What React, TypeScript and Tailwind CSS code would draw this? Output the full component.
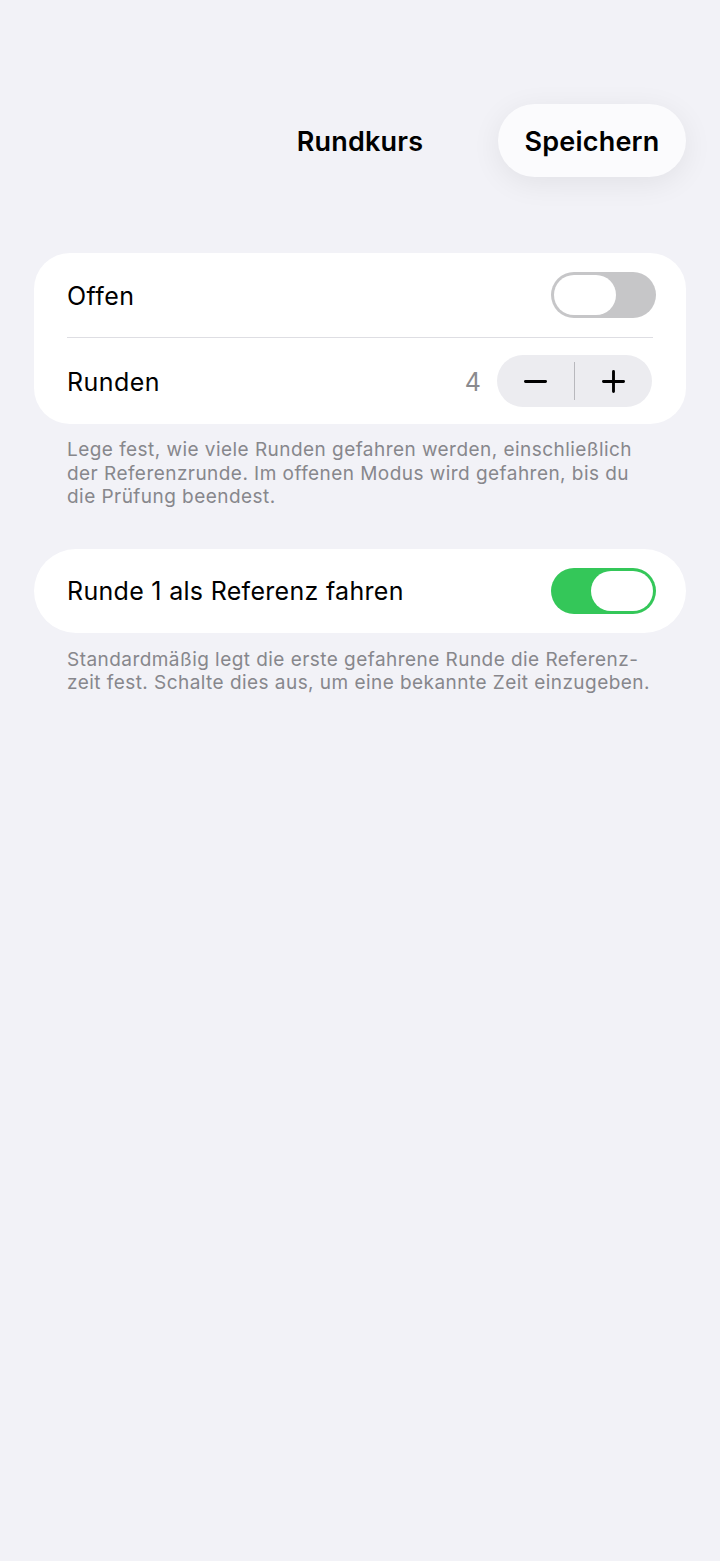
import React from "react";

function Toggle({ on }: { on: boolean }) {
  return (
    <div
      className={`relative h-[46px] w-[105px] shrink-0 rounded-full ${
        on ? "bg-[#34c759]" : "bg-[#c6c6c8]"
      }`}
    >
      <div
        className={`absolute top-[3px] h-[40px] w-[62px] rounded-full bg-white ${
          on ? "right-[3px]" : "left-[3px]"
        }`}
      />
    </div>
  );
}

export default function App() {
  return (
    <div
      className="min-h-[1561px] w-full bg-[#f2f2f7] text-black"
      style={{ fontFamily: "Inter, 'Noto Sans', 'Liberation Sans', sans-serif" }}
    >
      {/* Header */}
      <div className="flex items-center px-[34px] pt-[104px]">
        <div className="flex-1" />
        <div className="pt-[4px] text-[27px] font-semibold tracking-[0.2px]">Rundkurs</div>
        <div className="flex flex-1 justify-end">
          <button className="flex h-[73px] w-[188px] items-center justify-center rounded-full bg-[#fbfbfd] pt-[3px] text-[27px] font-semibold tracking-[0.2px] text-black shadow-[0_6px_30px_rgba(0,0,0,0.07)]">
            Speichern
          </button>
        </div>
      </div>

      {/* Card 1 */}
      <div className="mx-[34px] mt-[76px] rounded-[36px] bg-white">
        <div className="flex h-[84px] items-center justify-between pl-[33px] pr-[30px]">
          <span className="pt-[3px] text-[25px] tracking-[0.45px]">Offen</span>
          <Toggle on={false} />
        </div>
        <div className="mx-[33px] h-px bg-[#dedee3]" />
        <div className="flex h-[86px] items-center justify-between pl-[33px] pr-[34px]">
          <span className="pt-[3px] text-[25px] tracking-[0.45px]">Runden</span>
          <div className="flex items-center gap-[16px]">
            <span className="pt-[3px] text-[25px] text-[#8a8a8e]">4</span>
            <div className="flex h-[52px] w-[155px] items-center rounded-full bg-[#ececf0]">
              <div className="flex flex-1 items-center justify-center">
                <svg width="23" height="23" viewBox="0 0 24 24">
                  <path d="M1.5 12h21" stroke="#000" strokeWidth="3" strokeLinecap="round" />
                </svg>
              </div>
              <div className="h-[38px] w-px bg-[#b8b8bd]" />
              <div className="flex flex-1 items-center justify-center">
                <svg width="23" height="23" viewBox="0 0 24 24">
                  <path d="M1.5 12h21M12 1.5v21" stroke="#000" strokeWidth="3" strokeLinecap="round" />
                </svg>
              </div>
            </div>
          </div>
        </div>
      </div>
      <p className="ml-[67px] mt-[14px] whitespace-nowrap text-[19px] leading-[23.5px] tracking-[0.45px] text-[#87878c]">
        Lege fest, wie viele Runden gefahren werden, einschließlich
        <br />
        der Referenzrunde. Im offenen Modus wird gefahren, bis du
        <br />
        die Prüfung beendest.
      </p>

      {/* Card 2 */}
      <div className="mx-[34px] mt-[40px] flex h-[84px] items-center justify-between rounded-full bg-white pl-[33px] pr-[30px]">
        <span className="pt-[3px] text-[25px] tracking-[0.3px]">Runde 1 als Referenz fahren</span>
        <Toggle on={true} />
      </div>
      <p className="ml-[67px] mt-[15px] whitespace-nowrap text-[19px] leading-[23.5px] tracking-[0.45px] text-[#87878c]">
        Standardmäßig legt die erste gefahrene Runde die Referenz-
        <br />
        zeit fest. Schalte dies aus, um eine bekannte Zeit einzugeben.
      </p>
    </div>
  );
}
